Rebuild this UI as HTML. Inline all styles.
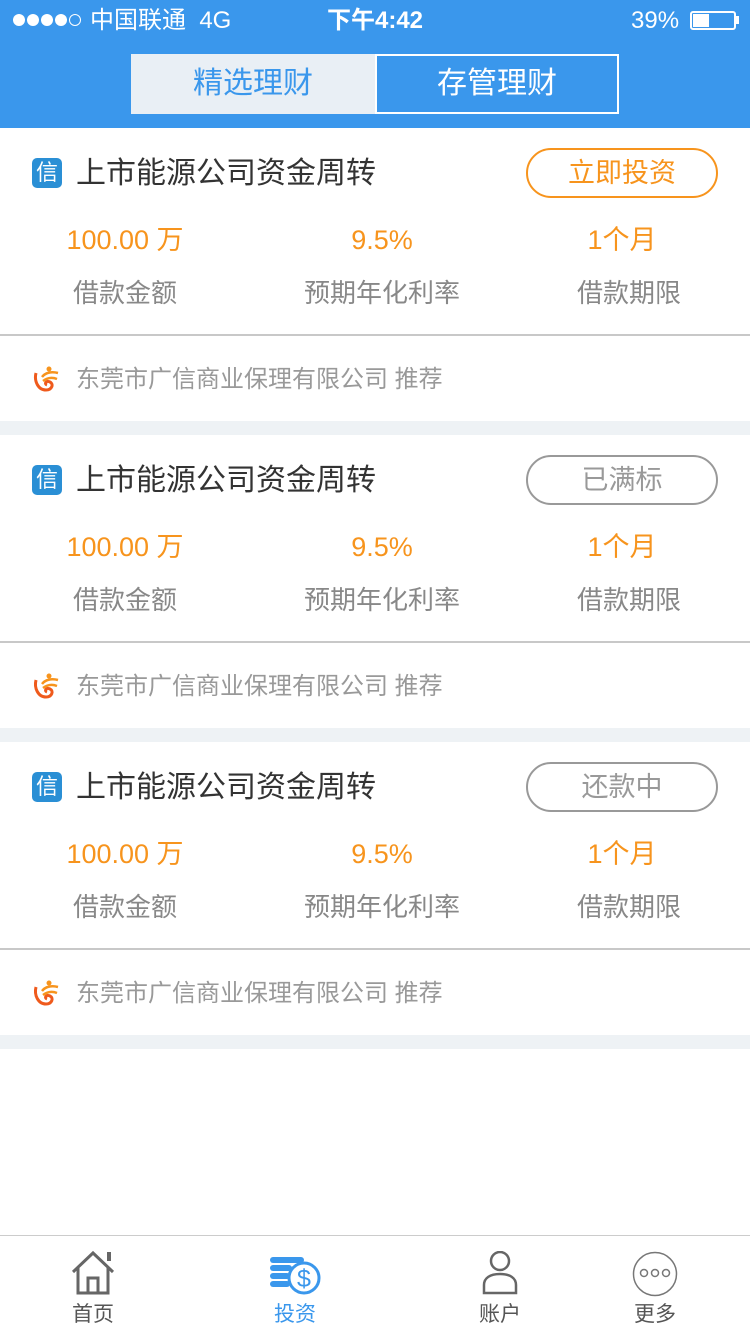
<!DOCTYPE html>
<html><head><meta charset="utf-8"><style>
*{margin:0;padding:0;box-sizing:border-box}
body{width:750px;height:1334px;position:relative;background:#fff;font-family:"Liberation Sans","Noto Sans CJK SC",sans-serif;overflow:hidden}
.a{position:absolute}
.hdr{left:0;top:0;width:750px;height:128px;background:#3a97ec}
.sb{color:#fff;font-size:24px;top:6px;line-height:30px}
.tab{top:54px;height:60px;width:244px;font-size:30px;line-height:60px;text-align:center}
.card{left:0;width:750px;height:293px;background:#fff}
.gap{left:0;width:750px;height:14px;background:#eef2f5}
.xin{left:32px;top:30px;width:30px;height:30px;background:#2a8fd5;border-radius:5px;color:#fff;font-size:22px;line-height:30px;text-align:center}
.ttl{left:76px;top:24px;font-size:30px;color:#333;line-height:44px}
.btn{left:526px;top:20px;width:192px;height:50px;border-radius:25px;border:2px solid #999;text-align:center;line-height:46px;font-size:27px;color:#999}
.val{top:94px;width:250px;text-align:center;font-size:27px;color:#f7941d;line-height:36px}
.lbl{top:147px;width:250px;text-align:center;font-size:26px;color:#888;line-height:36px}
.div{left:0;top:206px;width:750px;height:2px;background:#c8c8c8}
.rec{left:76px;top:235px;font-size:24px;color:#999;line-height:34px}
.logo{left:32px;top:237px}
.nav{left:0;top:1235px;width:750px;height:99px;border-top:1px solid #ccc;background:#fff}
.nl{top:62px;width:120px;text-align:center;font-size:21px;color:#555}
.dot{position:absolute;top:14px;width:12px;height:12px;border-radius:50%;background:#fff}
</style></head><body>
<div class="a hdr">
 <div class="dot" style="left:13px"></div><div class="dot" style="left:27px"></div><div class="dot" style="left:41px"></div><div class="dot" style="left:55px"></div><div class="dot" style="left:69px;background:none;border:1.5px solid #fff"></div>
 <div class="a sb" style="left:90px">中国联通&nbsp;&nbsp;4G</div>
 <div class="a sb" style="left:327px;font-weight:bold">下午4:42</div>
 <div class="a sb" style="left:631px">39%</div>
 <div class="a" style="left:690px;top:11px;width:46px;height:19px;border:2px solid #fff;border-radius:3px"><div style="width:16px;height:13px;background:#fff;margin:1px"></div></div>
 <div class="a" style="left:736px;top:16px;width:3px;height:8px;background:#fff"></div>
 <div class="a tab" style="left:131px;background:#e9eff5;color:#3a97ec">精选理财</div>
 <div class="a tab" style="left:375px;border:2px solid #fff;color:#fff;line-height:56px">存管理财</div>
</div>

<div class="a card" style="top:128px">
 <div class="a xin">信</div><div class="a ttl">上市能源公司资金周转</div>
 <div class="a btn" style="border-color:#f7941d;color:#f7941d">立即投资</div>
 <div class="a val" style="left:0">100.00 万</div><div class="a val" style="left:257px">9.5%</div><div class="a val" style="left:497px">1个月</div>
 <div class="a lbl" style="left:0">借款金额</div><div class="a lbl" style="left:257px">预期年化利率</div><div class="a lbl" style="left:504px">借款期限</div>
 <div class="a div"></div>
 <svg class="a logo" width="28" height="28" viewBox="0 0 28 28"><path d="M4 8C2 16 6 25 14 25c6 0 8-6 4-8-4-2-6 2-3 3" fill="none" stroke="#ef5a1c" stroke-width="3"/><path d="M10 12c3-4 9-6 16-4M11 16c4-3 9-4 14-2" stroke="#f7941d" stroke-width="2.5" fill="none"/><circle cx="17" cy="4" r="2.5" fill="#f7941d"/></svg>
 <div class="a rec">东莞市广信商业保理有限公司 推荐</div>
</div>
<div class="a gap" style="top:421px"></div>

<div class="a card" style="top:435px">
 <div class="a xin">信</div><div class="a ttl">上市能源公司资金周转</div>
 <div class="a btn">已满标</div>
 <div class="a val" style="left:0">100.00 万</div><div class="a val" style="left:257px">9.5%</div><div class="a val" style="left:497px">1个月</div>
 <div class="a lbl" style="left:0">借款金额</div><div class="a lbl" style="left:257px">预期年化利率</div><div class="a lbl" style="left:504px">借款期限</div>
 <div class="a div"></div>
 <svg class="a logo" width="28" height="28" viewBox="0 0 28 28"><path d="M4 8C2 16 6 25 14 25c6 0 8-6 4-8-4-2-6 2-3 3" fill="none" stroke="#ef5a1c" stroke-width="3"/><path d="M10 12c3-4 9-6 16-4M11 16c4-3 9-4 14-2" stroke="#f7941d" stroke-width="2.5" fill="none"/><circle cx="17" cy="4" r="2.5" fill="#f7941d"/></svg>
 <div class="a rec">东莞市广信商业保理有限公司 推荐</div>
</div>
<div class="a gap" style="top:728px"></div>

<div class="a card" style="top:742px">
 <div class="a xin">信</div><div class="a ttl">上市能源公司资金周转</div>
 <div class="a btn">还款中</div>
 <div class="a val" style="left:0">100.00 万</div><div class="a val" style="left:257px">9.5%</div><div class="a val" style="left:497px">1个月</div>
 <div class="a lbl" style="left:0">借款金额</div><div class="a lbl" style="left:257px">预期年化利率</div><div class="a lbl" style="left:504px">借款期限</div>
 <div class="a div"></div>
 <svg class="a logo" width="28" height="28" viewBox="0 0 28 28"><path d="M4 8C2 16 6 25 14 25c6 0 8-6 4-8-4-2-6 2-3 3" fill="none" stroke="#ef5a1c" stroke-width="3"/><path d="M10 12c3-4 9-6 16-4M11 16c4-3 9-4 14-2" stroke="#f7941d" stroke-width="2.5" fill="none"/><circle cx="17" cy="4" r="2.5" fill="#f7941d"/></svg>
 <div class="a rec">东莞市广信商业保理有限公司 推荐</div>
</div>
<div class="a gap" style="top:1035px"></div>

<div class="a nav">
 <svg class="a" style="left:70px;top:14px" width="48" height="46" viewBox="0 0 48 46"><path d="M3 22L23 3l20 19M8 18v25h30V18M18 43V28h10v15" fill="none" stroke="#666" stroke-width="3"/><rect x="37" y="2" width="4" height="9" fill="#666"/></svg>
 <div class="a nl" style="left:33px">首页</div>
 <svg class="a" style="left:268px;top:20px" width="54" height="40" viewBox="0 0 54 40"><g fill="#3a97ec"><rect x="2" y="1" width="34" height="6" rx="3"/><rect x="2" y="9" width="22" height="6" rx="3"/><rect x="2" y="17" width="20" height="6" rx="3"/><rect x="2" y="25" width="20" height="6" rx="3"/></g><circle cx="36" cy="22" r="15" fill="#fff" stroke="#3a97ec" stroke-width="3"/><text x="36" y="31" font-size="25" text-anchor="middle" fill="#3a97ec" font-family="Liberation Sans">$</text></svg>
 <div class="a nl" style="left:235px;color:#3a97ec">投资</div>
 <svg class="a" style="left:481px;top:15px" width="38" height="44" viewBox="0 0 38 44"><circle cx="19" cy="10" r="9" fill="none" stroke="#666" stroke-width="2.5"/><path d="M3 42V34c0-7 6-11 16-11s16 4 16 11v8z" fill="none" stroke="#666" stroke-width="2.5"/></svg>
 <div class="a nl" style="left:440px">账户</div>
 <svg class="a" style="left:632px;top:15px" width="46" height="46" viewBox="0 0 46 46"><circle cx="23" cy="23" r="21.5" fill="none" stroke="#777" stroke-width="1.5"/><g fill="none" stroke="#777" stroke-width="1.5"><circle cx="12" cy="22" r="3.5"/><circle cx="23" cy="22" r="3.5"/><circle cx="34" cy="22" r="3.5"/></g></svg>
 <div class="a nl" style="left:595px">更多</div>
</div>
</body></html>
